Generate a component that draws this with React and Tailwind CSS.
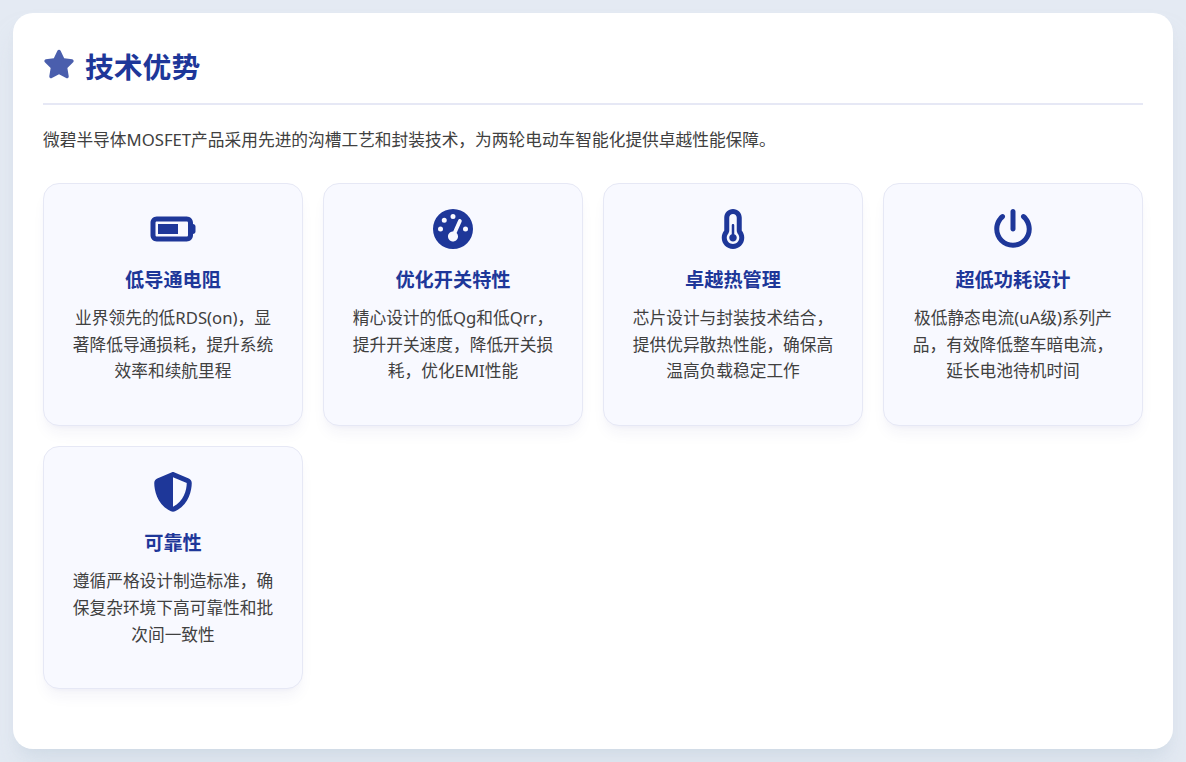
import { FaBatteryThreeQuarters, FaGaugeHigh, FaTemperatureHalf, FaPowerOff, FaShieldHalved, FaStar } from 'react-icons/fa6';

const features = [
  {
    icon: FaBatteryThreeQuarters,
    title: '低导通电阻',
    text: '业界领先的低RDS(on)，显著降低导通损耗，提升系统效率和续航里程',
  },
  {
    icon: FaGaugeHigh,
    title: '优化开关特性',
    text: '精心设计的低Qg和低Qrr，提升开关速度，降低开关损耗，优化EMI性能',
  },
  {
    icon: FaTemperatureHalf,
    title: '卓越热管理',
    text: '芯片设计与封装技术结合，提供优异散热性能，确保高温高负载稳定工作',
  },
  {
    icon: FaPowerOff,
    title: '超低功耗设计',
    text: '极低静态电流(uA级)系列产品，有效降低整车暗电流，延长电池待机时间',
  },
  {
    icon: FaShieldHalved,
    title: '可靠性',
    text: '遵循严格设计制造标准，确保复杂环境下高可靠性和批次间一致性',
  },
];

function FeatureCard({ icon: Icon, title, text }) {
  return (
    <div className="flex flex-col items-center rounded-2xl border border-[#e6e8f5] bg-[#f8f9ff] px-6 pt-6.25 pb-10 text-center shadow-lg shadow-indigo-900/5">
      <Icon className="h-10 w-12 text-[#1e3799]" />
      <h3 className="mt-3.75 text-[1.2rem] font-bold leading-8 text-[#1e3799]">{title}</h3>
      <p className="mt-2.25 text-[1.045rem] leading-[1.6] text-neutral-700">{text}</p>
    </div>
  );
}

export default function App() {
  return (
    <div
      className="flex min-h-screen items-center justify-center bg-[#e4eaf3] text-neutral-700"
      style={{ fontFamily: '"Noto Sans", "Noto Sans CJK SC", sans-serif' }}
    >
      <div className="w-full max-w-[1160px] rounded-[20px] bg-white p-7.5 shadow-xl shadow-slate-300/50">
        <div className="flex items-center gap-2.5 border-b-2 border-[#e6e8f5] pb-3">
          <FaStar className="mb-1.5 h-8 w-8 text-[#1e3799] opacity-80" />
          <h2 className="text-[1.8rem] font-bold leading-12 text-[#1e3799]">技术优势</h2>
        </div>
        <p className="mt-5 text-[1.045rem] leading-7.5">
          微碧半导体MOSFET产品采用先进的沟槽工艺和封装技术，为两轮电动车智能化提供卓越性能保障。
        </p>
        <div className="mt-7 mb-7.5 grid grid-cols-4 gap-5">
          {features.map((f) => (
            <FeatureCard key={f.title} {...f} />
          ))}
        </div>
      </div>
    </div>
  );
}
